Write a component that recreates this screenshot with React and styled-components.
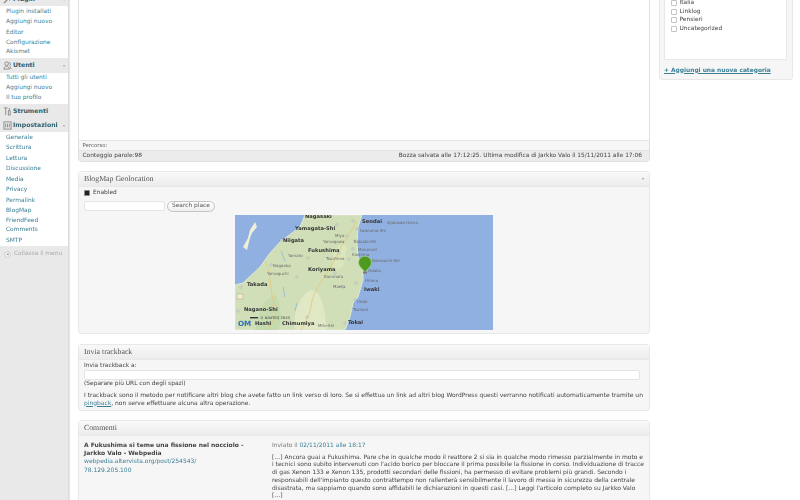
import React from "react";
import styled, { createGlobalStyle } from "styled-components";

const GlobalStyle = createGlobalStyle`
  *, *::before, *::after {
    box-sizing: border-box;
  }
  html, body {
    margin: 0;
    height: 100%;
    overflow: hidden;
    background: #fff;
  }
  body {
    font-family: "DejaVu Sans", "Liberation Sans", sans-serif;
    font-size: 5.9px;
    color: #333;
    text-rendering: geometricPrecision;
  }
`;

// the reference is a scaled down capture, the slight blur is part of its look
const Page = styled.div`
  display: grid;
  grid-template-columns: 69px 581px 143px;
  width: 800px;
  height: 500px;
  overflow: hidden;
  filter: blur(0.3px);
`;

// the page is scrolled down, so every column starts above the window
const Sidebar = styled.nav`
  margin-top: -8px;
  height: 520px;
  background: #e9e9e9;
  border-right: 1px solid #dcdcdc;
  box-shadow: 1px 0 1px #e8e8e8;
`;

const MenuHead = styled.div`
  display: flex;
  align-items: center;
  height: ${(p) => p.$h || 14}px;
  padding: 0 3px;
  gap: 1px;
  background: #e9e9e9;
  font-weight: bold;
  font-size: 6.2px;
  color: #2f6171;
  span:last-child {
    margin-left: auto;
    color: #aaa;
    font-size: 4px;
  }
`;

const MenuIcon = styled.svg`
  width: 9px;
  height: 9px;
  flex: none;
`;

const SubMenu = styled.ul`
  list-style: none;
  margin: 0;
  padding: ${(p) => p.$top ?? 0.8}px 0 ${(p) => p.$bottom ?? 0}px;
  background: #fff;
`;

const SubItem = styled.li`
  padding: ${(p) => (p.$multi ? "1px 0 1px 6px" : "0 0 0 6px")};
  line-height: ${(p) => (p.$multi ? 8.7 : 10.45)}px;
  color: #3b7f95;
  font-size: 5.9px;
`;

const Collapse = styled.div`
  display: flex;
  align-items: center;
  gap: 3px;
  height: 16px;
  padding-left: 4px;
  color: #aaa;
  font-size: 5.9px;
`;

const CollapseIcon = styled.i`
  display: grid;
  place-items: center;
  width: 7px;
  height: 7px;
  border-radius: 50%;
  background: #f4f4f4;
  border: 1px solid #ccc;
  font-style: normal;
  font-size: 3px;
  color: #999;
`;

const Main = styled.main`
  display: flex;
  flex-direction: column;
  padding-left: 9px;
  margin-top: -4px;
`;

const Editor = styled.section`
  flex: none;
  border: 1px solid #dfdfdf;
  border-top: 0;
  border-radius: 0 0 4px 4px;
  background: #fff;
  margin-bottom: 9px;
`;

const EditorBody = styled.div`
  height: 144px;
`;

const PathRow = styled.div`
  height: 10px;
  line-height: 10px;
  padding-left: 3.5px;
  font-size: 5.4px;
  color: #666;
  background: #f6f6f6;
  border-top: 1px solid #e4e4e4;
`;

const StatusRow = styled.div`
  display: flex;
  justify-content: space-between;
  height: 11px;
  line-height: 11px;
  padding: 0 7px 0 3.5px;
  background: #ececec;
  border-top: 1px solid #e4e4e4;
  color: #444;
  font-size: 5.85px;
`;

const Postbox = styled.section`
  flex: none;
  background: #f6f6f6;
  border: 1px solid #e8e8e8;
  border-radius: 3px;
  margin-bottom: ${(p) => p.$gap || 9}px;
`;

const BoxTitle = styled.h3`
  display: flex;
  justify-content: space-between;
  align-items: center;
  margin: 0;
  height: 14.5px;
  padding: 0 5px;
  background: linear-gradient(#f9f9f9, #ececec);
  border-bottom: 1px solid #e8e8e8;
  font-family: "Liberation Serif", "DejaVu Serif", serif;
  font-weight: normal;
  font-size: 7.8px;
  color: #555;
  span {
    font-family: "DejaVu Sans", sans-serif;
    font-size: 4px;
    color: #999;
  }
`;

const GeoBody = styled.div`
  display: flex;
  flex-direction: column;
  height: 146.5px;
  padding: 1.5px 5px 0;
`;

const CheckRow = styled.label`
  display: flex;
  align-items: center;
  gap: 3px;
  height: 10px;
  color: #444;
`;

const Tick = styled.i`
  flex: none;
  width: 6px;
  height: 6px;
  border: 1px solid ${(p) => (p.$on ? "#888" : "#c4c4c4")};
  border-radius: 1px;
  background: ${(p) => (p.$on ? "#222" : "#fff")};
`;

const SearchRow = styled.div`
  display: flex;
  align-items: center;
  gap: 2px;
  margin-top: 2.5px;
`;

const TextInput = styled.div`
  width: ${(p) => p.$w || "auto"};
  height: ${(p) => p.$h || 10.5}px;
  background: #fff;
  border: 1px solid #e4e4e4;
  border-radius: 2px;
`;

const Pill = styled.div`
  height: 11px;
  line-height: 9px;
  padding: 0 4px;
  border: 1px solid #c4c4c4;
  border-radius: 6px;
  background: linear-gradient(#fff, #eee);
  color: #555;
`;

const MapFrame = styled.svg`
  display: block;
  width: 258px;
  height: 115px;
  margin: 3.5px 0 0 151px;
`;

const TrackBody = styled.div`
  height: 50.5px;
  padding: 2px 5px 0;
  line-height: 8px;
  color: #444;
`;

const TrackInput = styled(TextInput)`
  margin: 0.5px 4px 0 0;
`;

const Note = styled.p`
  margin: 3.5px 0 0;
  color: #444;
  font-size: 5.98px;
  white-space: nowrap;
`;

const Link = styled.a`
  color: #3b7f95;
  text-decoration: ${(p) => (p.$under ? "underline" : "none")};
`;

const CommentRow = styled.div`
  display: grid;
  grid-template-columns: 188px 1fr;
  padding: 6px 5px 0;
  height: 80px;
  font-size: 5.98px;
  line-height: 8.4px;
  white-space: nowrap;
`;

const Author = styled.strong`
  display: block;
  color: #444;
`;

const Meta = styled.div`
  color: #777;
  margin-bottom: 3.8px;
`;

const CommentText = styled.p`
  margin: 0;
  line-height: 7.7px;
  color: #444;
`;

const Aside = styled.aside`
  display: flex;
  flex-direction: column;
  padding-left: 9px;
`;

const CatBox = styled.section`
  margin-top: -4px;
  height: 84px;
  padding: 0 5px 0 4px;
  background: #f6f6f6;
  border: 1px solid #e8e8e8;
  border-radius: 0 0 3px 3px;
`;

const CatList = styled.div`
  height: 63px;
  padding: 1.5px 0 0 6px;
  background: #fff;
  border: 1px solid #e8e8e8;
  border-top: 0;
`;

const CatItem = styled.div`
  display: flex;
  align-items: center;
  gap: 2.5px;
  height: 8.8px;
  color: #444;
`;

const AddCat = styled.a`
  display: block;
  margin-top: 7.5px;
  font-weight: bold;
  color: #3b7f95;
  text-decoration: underline;
  font-size: 5.9px;
`;

// [text, x, baseline, is a big town]
const mapLabels = [
  ["Nagasaki", 70, 3, true],
  ["Sendai", 127, 8, true],
  ["Ayakawa-Hama", 152, 9, false],
  ["Iwanuma-Shi", 125, 17, false],
  ["Yamagata-Shi", 60, 15, true],
  ["Niigata", 48, 27, true],
  ["Miya", 100, 22, false],
  ["Yamagawa", 88, 28, false],
  ["Kakuda-Shi", 119, 28, false],
  ["Marumori", 123, 36, false],
  ["Fukushima", 73, 37, true],
  ["Yamato", 53, 42, false],
  ["Kashima", 117, 41, false],
  ["Tsushima", 91, 45, false],
  ["Namaachi-Shi", 137, 47, false],
  ["Nagaoka", 38, 52, false],
  ["Koriyama", 73, 56, true],
  ["Yamaguchi", 32, 60, false],
  ["Odaka", 133, 57, false],
  ["Kammata", 89, 63, false],
  ["Hirono", 130, 67, false],
  ["Takada", 12, 71, true],
  ["Maeta", 98, 73, false],
  ["Iwaki", 129, 76, true],
  ["Ueda", 122, 88, false],
  ["Tsuhara", 118, 96, false],
  ["Nagano-Shi", 9, 96, true],
  ["Hashi", 20, 110, true],
  ["Chimumiya", 47, 110, true],
  ["Tokai", 113, 109, true],
  ["Mito-Shi", 83, 112, false],
];

const mapTowns = [
  [102, 10], [118, 6], [122, 14], [46, 25], [112, 21], [120, 26], [118, 34],
  [104, 38], [114, 44], [73, 43], [36, 50], [100, 58], [121, 68], [120, 85],
  [6, 72], [3, 96], [110, 108], [72, 102], [108, 72], [62, 62],
];

function GeoMap() {
  return (
    <MapFrame viewBox="0 0 258 115">
      <rect width="258" height="115" fill="#8fb0e0" />
      <path
        d="M0 70 L8 68 L25 52 L35 38 L45 27 L65 12 L70 0 L127 0 L123 12 L122 28 L123 42 L128 52 L128 65 L123 82 L118 88 L115 102 L110 115 L0 115 Z"
        fill="#d0dfb8"
        stroke="#dfe9d2"
        strokeWidth="1"
      />
      <path d="M60 115 C58 100 62 84 74 76 C84 72 88 88 90 100 L92 115 Z" fill="#e0e8c6" />
      <path d="M20 115 C24 100 26 84 40 80 C48 90 46 106 44 115 Z" fill="#c6dab0" />
      <path d="M98 40 C102 30 106 26 112 32 L108 52 L98 56 Z" fill="#dbe6bd" />
      <path d="M15 15 L20 7 L22 12 L17 18 L15 23 L12 35 L8 32 L13 23 Z" fill="#eef0d8" />
      <path
        d="M122 6 C116 18 108 26 100 44 C92 62 78 72 76 92 C74 102 70 108 66 115 M30 46 C38 64 34 76 40 92 C42 102 36 108 34 115"
        fill="none"
        stroke="#e8c878"
        strokeWidth="0.9"
      />
      <path d="M48 72 L50 82 M62 88 L60 96 M46 36 L50 46" fill="none" stroke="#8db6dc" strokeWidth="0.8" />
      {mapTowns.map(([x, y]) => (
        <circle key={`${x}-${y}`} cx={x} cy={y} r="1.1" fill="#fff" stroke="#777" strokeWidth="0.4" />
      ))}
      {mapLabels.map(([t, x, y, big]) => (
        <text
          key={t}
          x={x}
          y={y}
          fontSize={big ? 5.2 : 4}
          fontWeight={big ? "bold" : "normal"}
          fontFamily="DejaVu Sans, sans-serif"
          fill={big ? "#333" : "#6a6a6a"}
        >
          {t}
        </text>
      ))}
      <rect x="2" y="79" width="6" height="5" fill="#f2ecc8" stroke="#999" strokeWidth="0.4" />
      <rect x="15" y="102" width="8" height="1.4" fill="#334" />
      <text x="25" y="103.5" fontSize="3.6" fontFamily="DejaVu Sans, sans-serif" fill="#333">
        © NAVTEQ 2010
      </text>
      <text x="3" y="111" fontSize="7.2" fontWeight="bold" fontFamily="DejaVu Sans, sans-serif" fill="#2f6fb5">
        OM
      </text>
      <path d="M130 57 L125.4 52 A6.4 6.4 0 1 1 134.6 52 Z" fill="#4c9a1e" stroke="#a9cf8a" strokeWidth="0.6" />
      <rect x="128" y="56.5" width="4" height="2" fill="#777" />
    </MapFrame>
  );
}

const UserIcon = () => (
  <MenuIcon viewBox="0 0 10 10">
    <circle cx="4" cy="3" r="2" fill="none" stroke="#888" />
    <path d="M1 9 C1 5 7 5 7 9 Z M6 2a1.6 1.6 0 1 1 1 3M8 6l1 3" fill="none" stroke="#888" />
  </MenuIcon>
);
const ToolIcon = () => (
  <MenuIcon viewBox="0 0 10 10">
    <path d="M1 1h4M3 1v8M7 1v3M6 4h2v5H6z" fill="none" stroke="#888" />
  </MenuIcon>
);
const GearIcon = () => (
  <MenuIcon viewBox="0 0 10 10">
    <rect x="1" y="1" width="8" height="8" fill="none" stroke="#888" />
    <path d="M3 3v4M5 3v4M7 3v4" stroke="#888" />
  </MenuIcon>
);
const PlugIcon = () => (
  <MenuIcon viewBox="0 0 10 10">
    <path d="M1 9 L5 5 M4 2 L8 6" stroke="#888" fill="none" strokeWidth="1.4" />
  </MenuIcon>
);

const pluginItems = ["Plugin installati", "Aggiungi nuovo", "Editor"];
const userItems = ["Tutti gli utenti", "Aggiungi nuovo", "Il tuo profilo"];
const settingItems = [
  "Generale",
  "Scrittura",
  "Lettura",
  "Discussione",
  "Media",
  "Privacy",
  "Permalink",
  "BlogMap",
];

export default function App() {
  return (
    <>
      <GlobalStyle />
      <Page>
        <Sidebar>
          <MenuHead>
            <PlugIcon />
            Plugin
            <span>▾</span>
          </MenuHead>
          <SubMenu>
            {pluginItems.map((t) => (
              <SubItem key={t}>{t}</SubItem>
            ))}
            <SubItem $multi>
              Configurazione
              <br />
              Akismet
            </SubItem>
          </SubMenu>
          <MenuHead $h={15}>
            <UserIcon />
            Utenti
            <span>▾</span>
          </MenuHead>
          <SubMenu $top={0} $bottom={0.4}>
            {userItems.map((t) => (
              <SubItem key={t}>{t}</SubItem>
            ))}
          </SubMenu>
          <MenuHead>
            <ToolIcon />
            Strumenti
          </MenuHead>
          <MenuHead>
            <GearIcon />
            Impostazioni
            <span>▾</span>
          </MenuHead>
          <SubMenu $top={0.5}>
            {settingItems.map((t) => (
              <SubItem key={t}>{t}</SubItem>
            ))}
            <SubItem $multi>
              FriendFeed
              <br />
              Comments
            </SubItem>
            <SubItem>SMTP</SubItem>
          </SubMenu>
          <Collapse>
            <CollapseIcon>◀</CollapseIcon>
            Collassa il menu
          </Collapse>
        </Sidebar>

        <Main>
          <Editor>
            <EditorBody />
            <PathRow>Percorso:</PathRow>
            <StatusRow>
              <span>Conteggio parole:98</span>
              <span>Bozza salvata alle 17:12:25. Ultima modifica di Jarkko Valo il 15/11/2011 alle 17:06</span>
            </StatusRow>
          </Editor>

          <Postbox $gap={10}>
            <BoxTitle>
              BlogMap Geolocation
              <span>▾</span>
            </BoxTitle>
            <GeoBody>
              <CheckRow>
                <Tick $on />
                Enabled
              </CheckRow>
              <SearchRow>
                <TextInput $w="81px" />
                <Pill>Search place</Pill>
              </SearchRow>
              <GeoMap />
            </GeoBody>
          </Postbox>

          <Postbox>
            <BoxTitle>Invia trackback</BoxTitle>
            <TrackBody>
              Invia trackback a:
              <TrackInput $h={10} />
              (Separare più URL con degli spazi)
              <Note>
                I trackback sono il metodo per notificare altri blog che avete fatto un link verso di loro. Se si effettua un link ad altri blog WordPress questi verranno notificati automaticamente tramite un
                <br />
                <Link $under>pingback</Link>, non serve effettuare alcuna altra operazione.
              </Note>
            </TrackBody>
          </Postbox>

          <Postbox>
            <BoxTitle>Commenti</BoxTitle>
            <CommentRow>
              <div>
                <Author>
                  A Fukushima si teme una fissione nel nocciolo -
                  <br />
                  Jarkko Valo - Webpedia
                </Author>
                <Link>webpedia.altervista.org/post/254543/</Link>
                <br />
                <Link>78.129.205.100</Link>
              </div>
              <div>
                <Meta>
                  Inviato il <Link>02/11/2011 alle 18:17</Link>
                </Meta>
                <CommentText>
                  […] Ancora guai a Fukushima. Pare che in qualche modo il reattore 2 si sia in qualche modo rimesso parzialmente in moto e
                  <br />
                  i tecnici sono subito intervenuti con l'acido borico per bloccare il prima possibile la fissione in corso. Individuazione di tracce
                  <br />
                  di gas Xenon 133 e Xenon 135, prodotti secondari delle fissioni, ha permesso di evitare problemi più grandi. Secondo i
                  <br />
                  responsabili dell'impianto questo contrattempo non rallenterà sensibilmente il lavoro di messa in sicurezza della centrale
                  <br />
                  disastrata, ma sappiamo quando sono affidabili le dichiarazioni in questi casi. […] Leggi l'articolo completo su Jarkko Valo
                  <br />
                  […]
                </CommentText>
              </div>
            </CommentRow>
          </Postbox>
        </Main>

        <Aside>
          <CatBox>
            <CatList>
              {["Italia", "Linklog", "Pensieri", "Uncategorized"].map((t) => (
                <CatItem key={t}>
                  <Tick />
                  {t}
                </CatItem>
              ))}
            </CatList>
            <AddCat>+ Aggiungi una nuova categoria</AddCat>
          </CatBox>
        </Aside>
      </Page>
    </>
  );
}
